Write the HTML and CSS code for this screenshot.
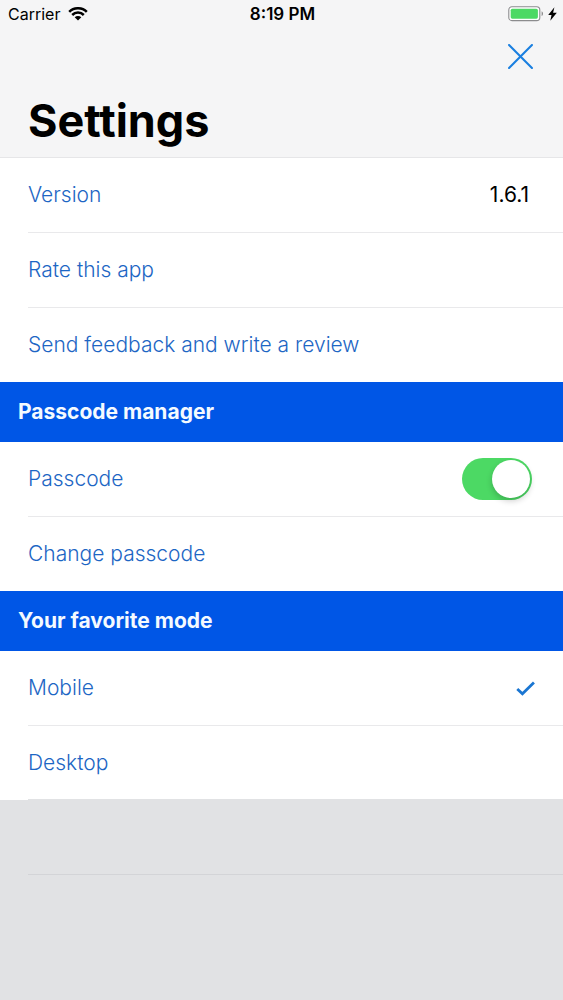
FILE: index.html
```html
<!DOCTYPE html>
<html lang="en">
<head>
  <meta charset="utf-8">
  <meta name="viewport" content="width=device-width, initial-scale=1">
  <title>Settings</title>
  <link rel="stylesheet" href="styles.css">
</head>
<body>
  <header class="top">
    <div class="status">
      <div class="status-left">
        <span>Carrier</span>
        <svg class="wifi" viewBox="0 0 20 14" aria-hidden="true">
          <path d="M1.2 4.9a12.4 12.4 0 0 1 17.6 0M4.2 8a8.2 8.2 0 0 1 11.6 0" fill="none" stroke="currentColor" stroke-width="2.5"/>
          <path d="M10 13.6 6.7 10.3a4.7 4.7 0 0 1 6.6 0z" fill="currentColor"/>
        </svg>
      </div>
      <time class="clock">8:19 PM</time>
      <div class="status-right">
        <svg class="battery" viewBox="0 0 36 16" aria-hidden="true">
          <rect x="0.8" y="0.8" width="31" height="13.8" rx="3.2" fill="#fff" stroke="#8c8c8e" stroke-width="1.1"/>
          <rect x="2.7" y="2.7" width="27.2" height="10" rx="1.6" fill="#4cd964"/>
          <path d="M33.6 5.2c1.9.8 1.9 4 0 4.8z" fill="#8c8c8e"/>
        </svg>
        <svg class="bolt" viewBox="0 0 9 14" aria-hidden="true">
          <path d="M6.4.2.2 8h3.3L2.3 13.8 8.8 5.7H5.1z" fill="currentColor"/>
        </svg>
      </div>
    </div>
    <div class="actions">
      <button class="close" type="button" aria-label="Close">
        <svg viewBox="0 0 24 24" aria-hidden="true">
          <path d="M1 1l22 22M23 1 1 23" fill="none" stroke="currentColor" stroke-width="2" stroke-linecap="round"/>
        </svg>
      </button>
    </div>
    <h1 class="title">Settings</h1>
  </header>

  <main>
    <section class="group">
      <div class="row"><span>Version</span><span class="value">1.6.1</span></div>
      <button class="row" type="button">Rate this app</button>
      <button class="row" type="button">Send feedback and write a review</button>
    </section>

    <h2 class="band">Passcode manager</h2>
    <section class="group">
      <div class="row">
        <label for="passcode">Passcode</label>
        <input class="switch" id="passcode" type="checkbox" role="switch" checked>
      </div>
      <button class="row" type="button">Change passcode</button>
    </section>

    <h2 class="band">Your favorite mode</h2>
    <section class="group group-end">
      <label class="row">
        <span>Mobile</span>
        <input class="radio" type="radio" name="mode" checked>
        <svg class="tick" viewBox="0 0 18 14" aria-hidden="true">
          <path d="M1.2 7.4 6.1 12 17 1.4" fill="none" stroke="currentColor" stroke-width="2.6"/>
        </svg>
      </label>
      <label class="row">
        <span>Desktop</span>
        <input class="radio" type="radio" name="mode">
        <svg class="tick" viewBox="0 0 18 14" aria-hidden="true">
          <path d="M1.2 7.4 6.1 12 17 1.4" fill="none" stroke="currentColor" stroke-width="2.6"/>
        </svg>
      </label>
    </section>
    <div class="empty-row"></div>
  </main>
</body>
</html>
```
FILE: styles.css
```css
* {
  box-sizing: border-box;
}

body {
  margin: 0;
  min-height: 100vh;
  background: #e1e2e4;
  color: #000;
  font-family: Inter, "Liberation Sans", sans-serif;
}

.top {
  background: #f5f5f6;
  border-bottom: 1px solid #e6e6e8;
}

.status {
  display: grid;
  grid-template-columns: 1fr auto 1fr;
  align-items: center;
  height: 28px;
  padding: 0 6px 0 8px;
  font-size: 16px;
  line-height: 28px;
}

.status-left,
.status-right {
  display: flex;
  align-items: center;
  gap: 8px;
}

.status-right {
  justify-content: flex-end;
  gap: 4px;
}

.clock {
  font-size: 17px;
  font-weight: 600;
}

.wifi {
  width: 20px;
  height: 14px;
}

.battery {
  width: 36px;
  height: 16px;
}

.bolt {
  width: 9px;
  height: 14px;
}

.actions {
  display: flex;
  justify-content: flex-end;
  padding: 16px 30px 0 0;
}

.close {
  display: flex;
  padding: 0;
  border: 0;
  background: none;
  color: #1a7fe0;
}

.close svg {
  width: 25px;
  height: 25px;
}

.title {
  margin: 0;
  padding: 24px 28px 8px;
  font-size: 45px;
  font-weight: 700;
  line-height: 56px;
}

.group {
  padding-left: 28px;
  background: #fff;
}

.row {
  display: flex;
  align-items: center;
  width: 100%;
  min-height: 75px;
  padding: 0 28px 0 0;
  border: 0;
  border-bottom: 1px solid #e9e9eb;
  background: none;
  color: #1d66c4;
  font: inherit;
  font-size: 21px;
  font-weight: 300;
  line-height: 28px;
  text-align: left;
}

.row:last-child {
  min-height: 74px;
  border-bottom-color: transparent;
}

.group-end .row:last-child {
  border-bottom-color: #e1e2e4;
}

.value {
  margin-left: auto;
  padding-right: 6px;
  color: #000;
  font-weight: 400;
}

.band {
  margin: 0;
  padding: 16px 18px;
  background: #0056e6;
  color: #f4faff;
  font-size: 21px;
  font-weight: 700;
  line-height: 28px;
}

.switch {
  display: flex;
  width: 70px;
  height: 42px;
  margin: 0 3px 0 auto;
  padding: 2px;
  appearance: none;
  border-radius: 21px;
  background: #d8d8dc;
}

.switch::before {
  content: "";
  width: 38px;
  height: 38px;
  border-radius: 50%;
  background: #fff;
  box-shadow: 0 3px 6px rgba(0, 0, 0, 0.2);
}

.switch:checked {
  justify-content: flex-end;
  background: #4cd964;
}

.radio {
  width: 0;
  height: 0;
  margin: 0 0 0 auto;
  appearance: none;
}

.tick {
  width: 19px;
  height: 15px;
  color: #1a76d2;
  visibility: hidden;
}

.radio:checked + .tick {
  visibility: visible;
}

.empty-row {
  height: 75px;
  margin-left: 28px;
  border-bottom: 1px solid #d3d4d7;
}
```
